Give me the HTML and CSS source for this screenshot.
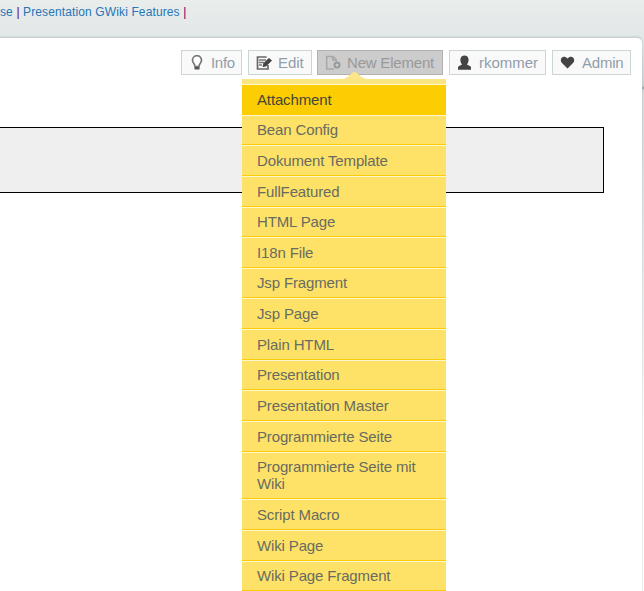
FILE: index.html
```
<!DOCTYPE html>
<html lang="de">
<head>
<meta charset="utf-8">
<title>GWiki</title>
<link rel="stylesheet" href="styles.css">
</head>
<body>
<nav class="crumbs"><a>se</a> | <a>Presentation GWiki Features</a> |</nav>
<main class="card">
  <div class="toolbar">
    <a class="btn info"><svg width="16" height="16" viewBox="0 0 16 16"><path d="M6 11.500C6 8.500 3.500 8 3.500 5.200a4.500 4.500 0 0 1 9 0C12.500 8 10 8.500 10 11.500z" fill="#fff" stroke="#777" stroke-width="1.700"/><path d="M5.500 12h5v2.500h-5z" fill="#555"/></svg><span>Info</span></a>
    <a class="btn edit"><svg width="16" height="16" viewBox="0 0 16 16"><path d="M10.500 2H1.500v12h10.500V10" fill="none" stroke="#666" stroke-width="1.700"/><path d="M3 5h7M3 7.500h5M3 10h3" stroke="#777" stroke-width="1.300"/><path d="M6.500 12l1-4 5.500-5 3 2.500-6 6z" fill="#444"/></svg><span>Edit</span></a>
    <div class="btn active"><svg width="16" height="16" viewBox="0 0 16 16"><path d="M9 14H1.700V1.500h6.500l3 3V6.500M7.700 1.500v3.500h3.300" fill="none" stroke="#a8a8a8" stroke-width="1.500"/><circle cx="12" cy="10" r="2.500" fill="none" stroke="#999" stroke-width="2"/></svg><span>New Element</span>
      <ul class="menu">
        <li class="selected">Attachment</li><li>Bean Config</li><li>Dokument Template</li><li>FullFeatured</li><li>HTML Page</li><li>I18n File</li><li>Jsp Fragment</li><li>Jsp Page</li><li>Plain HTML</li><li>Presentation</li><li>Presentation Master</li><li>Programmierte Seite</li><li>Programmierte Seite mit Wiki</li><li>Script Macro</li><li>Wiki Page</li><li>Wiki Page Fragment</li>
      </ul>
    </div>
    <a class="btn user"><svg width="16" height="16" viewBox="0 0 16 16"><path d="M5 9.500C2 5.500 3.300.5 7.500.5S13 5.500 10 9.500c1.500 1 4 1.200 4 3v2.200H1v-2.200c0-1.800 2.500-2 4-3z" fill="#444"/></svg><span>rkommer</span></a>
    <a class="btn admin"><svg width="16" height="16" viewBox="0 0 16 16"><path d="M7.500 13.500L2 8C-1.500 4 3.500-.8 7.500 3.500c4-4.300 9 .5 5.500 4.500z" fill="#444"/></svg><span>Admin</span></a>
  </div>
  <section class="panel"></section>
</main>
</body>
</html>
```
FILE: styles.css
```
* { box-sizing: border-box; }
body {
  margin: 0;
  height: 591px;
  overflow: hidden;
  background: linear-gradient(#e9edec 0, #e2e7e7 37px, #c9d3d5 86px, #8a989d 88px, #d5dada 90px, #dce0e0 180px, #fff 430px);
  font-family: "Liberation Sans", Arial, sans-serif;
}
.crumbs {
  height: 37px;
  padding-top: 5px;
  font-size: 12px;
  line-height: 14px;
  letter-spacing: .12px;
  color: #606;
  white-space: nowrap;
}
.crumbs a { color: #2575b7; }
.card {
  width: 642px;
  height: 554px;
  background: #fff;
  border-top: 1px solid #cbd2d2;
  border-top-right-radius: 5px;
  box-shadow: 0 0 2px #aeb9bc;
}
.toolbar {
  display: flex;
  justify-content: flex-end;
  gap: 6px;
  padding: 12px 11px 0 0;
}
.btn {
  position: relative;
  display: flex;
  align-items: center;
  height: 25px;
  padding-left: 7px;
  border: 1px solid #cbd5d6;
  background: #f9f9f9;
  color: #929dab;
  font-size: 15px;
  line-height: 17px;
  letter-spacing: -.03px;
  white-space: nowrap;
}
.btn svg { flex: none; margin-right: 6px; }
.info { width: 61px; }
.info span { letter-spacing: -.3px; }
.edit { width: 64px; margin-right: -1px; }
.active { width: 126px; background: #ccc; border-color: #b1b1b1; color: #999; letter-spacing: -.2px; }
.user { width: 97px; }
.admin { width: 79px; letter-spacing: -.2px; }
.menu {
  position: absolute;
  left: -76px;
  top: 28px;
  width: 204px;
  margin: 0;
  padding: 5px 0 0;
  list-style: none;
  background: #fde581;
  color: #696b62;
  letter-spacing: -.14px;
  white-space: normal;
}
.menu::before {
  content: "";
  position: absolute;
  left: 101px;
  top: -7px;
  width: 23px;
  height: 7px;
  background: #fde68a;
  clip-path: polygon(0 100%, 18% 75%, 42% 8%, 50% 0, 58% 8%, 82% 75%, 100% 100%);
}
.menu li {
  padding: 5.700px 15px;
  border-top: 1px solid #fff6cd;
  border-bottom: 1px solid #fccc05;
  background: #fde267;
  line-height: 17.250px;
}
.menu .selected { background: #fbcd02; color: #46463a; }
.panel {
  width: 604px;
  height: 66px;
  margin-top: 52px;
  border: 1px solid #000;
  border-left: 0;
  background: #efefef;
}
```
